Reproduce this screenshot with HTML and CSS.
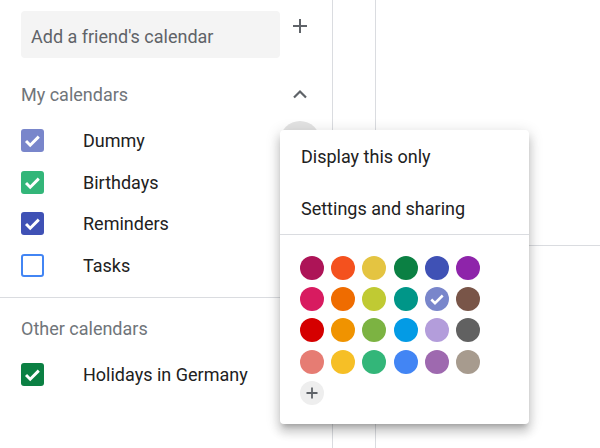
FILE: index.html
```html
<!DOCTYPE html>
<html>
<head>
<meta charset="utf-8">
<link rel="stylesheet" href="styles.css">
</head>
<body>
<div class="page">
  <aside class="sidebar">
    <div class="search-row">
      <div class="search">Add a friend's calendar</div>
      <div class="slot">
        <svg width="16" height="16" viewBox="0 0 16 16"><path d="M8 1v14M1 8h14" stroke="#5f6368" stroke-width="2" fill="none"/></svg>
      </div>
    </div>
    <div class="header first">
      <span>My calendars</span>
      <div class="slot">
        <svg width="16" height="10" viewBox="0 0 16 10"><path d="M2 8.5L8 2.5l6 6" stroke="#5f6368" stroke-width="2.2" fill="none"/></svg>
      </div>
    </div>
    <div class="row">
      <span class="cb" style="background:#7986cb"><svg viewBox="0 0 22 22"><path d="M4.8 11.5l4 4 8.2-8.2" stroke="#fff" stroke-width="2.8" fill="none"/></svg></span>
      <span class="label">Dummy</span>
      <div class="slot"><span class="hover"></span></div>
    </div>
    <div class="row">
      <span class="cb" style="background:#33b679"><svg viewBox="0 0 22 22"><path d="M4.8 11.5l4 4 8.2-8.2" stroke="#fff" stroke-width="2.8" fill="none"/></svg></span>
      <span class="label">Birthdays</span>
    </div>
    <div class="row">
      <span class="cb" style="background:#3f51b5"><svg viewBox="0 0 22 22"><path d="M4.8 11.5l4 4 8.2-8.2" stroke="#fff" stroke-width="2.8" fill="none"/></svg></span>
      <span class="label">Reminders</span>
    </div>
    <div class="row">
      <span class="cb empty"></span>
      <span class="label">Tasks</span>
    </div>
    <div class="divider"></div>
    <div class="header other">
      <span>Other calendars</span>
    </div>
    <div class="row">
      <span class="cb" style="background:#0b8043"><svg viewBox="0 0 22 22"><path d="M4.8 11.5l4 4 8.2-8.2" stroke="#fff" stroke-width="2.8" fill="none"/></svg></span>
      <span class="label">Holidays in Germany</span>
    </div>
  </aside>
  <div class="col"></div>
  <div class="grid-area">
    <div class="cell"></div>
  </div>

  <div class="menu">
    <div class="item">Display this only</div>
    <div class="item">Settings and sharing</div>
    <div class="menu-divider"></div>
    <div class="swatches">
      <span class="sw" style="background:#ad1457"></span>
      <span class="sw" style="background:#f4511e"></span>
      <span class="sw" style="background:#e4c441"></span>
      <span class="sw" style="background:#0b8043"></span>
      <span class="sw" style="background:#3f51b5"></span>
      <span class="sw" style="background:#8e24aa"></span>
      <span class="sw" style="background:#d81b60"></span>
      <span class="sw" style="background:#ef6c00"></span>
      <span class="sw" style="background:#c0ca33"></span>
      <span class="sw" style="background:#009688"></span>
      <span class="sw" style="background:#7986cb"><svg viewBox="0 0 24 24"><path d="M6.3 12.5l3.7 3.7 7.7-7.7" stroke="#fff" stroke-width="2.5" fill="none"/></svg></span>
      <span class="sw" style="background:#795548"></span>
      <span class="sw" style="background:#d50000"></span>
      <span class="sw" style="background:#f09300"></span>
      <span class="sw" style="background:#7cb342"></span>
      <span class="sw" style="background:#039be5"></span>
      <span class="sw" style="background:#b39ddb"></span>
      <span class="sw" style="background:#616161"></span>
      <span class="sw" style="background:#e67c73"></span>
      <span class="sw" style="background:#f6bf26"></span>
      <span class="sw" style="background:#33b679"></span>
      <span class="sw" style="background:#4285f4"></span>
      <span class="sw" style="background:#9e69af"></span>
      <span class="sw" style="background:#a79b8e"></span>
      <span class="sw add"><svg viewBox="0 0 24 24"><path d="M12 6.5v11M6.5 12h11" stroke="#5f6368" stroke-width="1.8" fill="none"/></svg></span>
    </div>
  </div>
</div>
</body>
</html>
```
FILE: styles.css
```css
* { box-sizing: border-box; }
html, body { margin: 0; padding: 0; background: #fff; }
body {
  font-family: Roboto, "Liberation Sans", Arial, sans-serif;
  color: #212121;
}
.page {
  position: relative;
  width: 600px;
  height: 448px;
  overflow: hidden;
  display: flex;
}
.sidebar {
  width: 333px;
  flex: none;
  border-right: 1px solid #dadce0;
  display: flex;
  flex-direction: column;
}
.col {
  width: 43px;
  flex: none;
  border-right: 1px solid #dadce0;
}
.grid-area {
  flex: 1;
}
.cell {
  height: 246px;
  border-bottom: 1px solid #dadce0;
}
.search-row {
  display: flex;
  align-items: center;
  margin-top: 11px;
  padding-left: 21px;
  height: 47px;
}
.search {
  width: 259px;
  height: 47px;
  background: #f4f4f4;
  border-radius: 4px;
  padding-left: 10px;
  padding-top: 3px;
  display: flex;
  align-items: center;
  font-size: 18px;
  color: #5f6368;
}
.slot {
  width: 40px;
  height: 40px;
  flex: none;
  display: flex;
  align-items: center;
  justify-content: center;
}
.search-row .slot { margin-bottom: 18px; }
.header {
  display: flex;
  align-items: center;
  justify-content: space-between;
  height: 42px;
  padding-left: 21px;
  padding-right: 12px;
  font-size: 18px;
  color: #70757a;
}
.header.first { margin-top: 15px; margin-bottom: 5px; }
.header.other { margin-top: 9px; margin-bottom: 5px; }
.row {
  display: flex;
  align-items: center;
  height: 41.5px;
  padding-left: 21px;
  padding-right: 12px;
}
.cb {
  width: 23px;
  height: 23px;
  border-radius: 3px;
  flex: none;
  display: flex;
}
.cb svg { width: 23px; height: 23px; }
.cb.empty {
  border: 2px solid #4285f4;
  background: #fff;
}
.label {
  margin-left: 39px;
  font-size: 18px;
  color: #212121;
  flex: 1;
}
.hover {
  width: 40px;
  height: 40px;
  border-radius: 50%;
  background: #e3e3e3;
}
.divider {
  height: 1px;
  background: #dadce0;
  margin-top: 11px;
}
.menu {
  position: absolute;
  left: 280px;
  top: 130px;
  width: 249px;
  height: 294px;
  background: #fff;
  border-radius: 4px;
  box-shadow: 0 8px 10px 1px rgba(0,0,0,.14), 0 3px 14px 2px rgba(0,0,0,.12), 0 5px 5px -3px rgba(0,0,0,.2);
}
.item {
  height: 52px;
  display: flex;
  align-items: center;
  padding-left: 21px;
  font-size: 18px;
  color: #212121;
}
.menu-divider {
  height: 1px;
  background: #dadce0;
}
.swatches {
  display: grid;
  grid-template-columns: repeat(6, 24px);
  column-gap: 7.2px;
  row-gap: 7.2px;
  padding-left: 20px;
  padding-top: 21px;
}
.sw {
  width: 24px;
  height: 24px;
  border-radius: 50%;
  display: flex;
}
.sw svg { width: 24px; height: 24px; }
.sw.add { background: #eeeeee; }
```
